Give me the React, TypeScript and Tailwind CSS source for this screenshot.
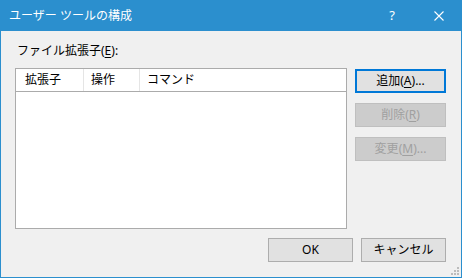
import React from 'react';

const font = { fontFamily: '"Noto Sans", "Noto Sans CJK JP", sans-serif' };

const SideButton = ({ label, mnemonic, rest, disabled, focused }: { label: string; mnemonic: string; rest: string; disabled?: boolean; focused?: boolean }) => {
  const base = 'w-[91px] h-[24px] flex items-center justify-center text-[12px] leading-none';
  const look = disabled
    ? 'bg-[#cccccc] border border-[#bfbfbf] text-[#a0a0a0]'
    : focused
      ? 'bg-[#e1e1e1] border-2 border-[#0078d7] text-black'
      : 'bg-[#e1e1e1] border border-[#adadad] text-black';
  return (
    <div className={`${base} ${look}`}>
      {label}(<span className="underline underline-offset-2">{mnemonic}</span>){rest}
    </div>
  );
};

export default function App() {
  return (
    <div className="w-[462px] h-[278px] bg-[#2b8fce] flex flex-col px-[1px] pb-[1px] select-none" style={font}>
      <div className="h-[31px] flex items-center text-white shrink-0">
        <span className="pl-[8px] text-[12px] flex-1">ユーザー ツールの構成</span>
        <span className="w-[14px] text-center text-[13px] mr-[35px]">?</span>
        <svg width="10" height="10" viewBox="0 0 10 10" className="mr-[17px]">
          <path d="M0.5 0.5 L9.5 9.5 M9.5 0.5 L0.5 9.5" stroke="white" strokeWidth="1.1" />
        </svg>
      </div>
      <div className="flex-1 bg-[#f0f0f0] flex flex-col pl-[14px] pr-[15px] pt-[12px] relative">
        <div className="h-[16px] text-[12px] leading-[16px] pl-[2px] text-black">
          ファイル拡張子(<span className="underline underline-offset-2">E</span>):
        </div>
        <div className="flex gap-[8px] mt-[9px]">
          <div className="w-[332px] h-[161px] bg-white border border-[#ababab]">
            <div className="h-[23px] flex border-b border-[#ababab] text-[12px] text-black">
              <div className="w-[68px] border-r border-[#e5e5e5] flex items-center pl-[9px]">拡張子</div>
              <div className="w-[56px] border-r border-[#e5e5e5] flex items-center pl-[7px]">操作</div>
              <div className="flex-1 flex items-center pl-[7px]">コマンド</div>
            </div>
          </div>
          <div className="flex flex-col gap-[10px] pt-[1px]">
            <SideButton label="追加" mnemonic="A" rest="..." focused />
            <SideButton label="削除" mnemonic="R" rest="" disabled />
            <SideButton label="変更" mnemonic="M" rest="..." disabled />
          </div>
        </div>
        <div className="flex justify-end gap-[8px] mt-[9px] text-[12px] text-black">
          <div className="w-[85px] h-[24px] bg-[#e1e1e1] border border-[#adadad] flex items-center justify-center">OK</div>
          <div className="w-[85px] h-[24px] bg-[#e1e1e1] border border-[#adadad] flex items-center justify-center">キャンセル</div>
        </div>
        <svg width="10" height="10" viewBox="0 0 10 10" className="absolute right-[1px] bottom-[1px]">
          <rect x="7" y="1" width="2" height="2" fill="#bcbcbc" />
          <rect x="4" y="4" width="2" height="2" fill="#bcbcbc" />
          <rect x="7" y="4" width="2" height="2" fill="#bcbcbc" />
          <rect x="1" y="7" width="2" height="2" fill="#bcbcbc" />
          <rect x="4" y="7" width="2" height="2" fill="#bcbcbc" />
          <rect x="7" y="7" width="2" height="2" fill="#bcbcbc" />
        </svg>
      </div>
    </div>
  );
}
